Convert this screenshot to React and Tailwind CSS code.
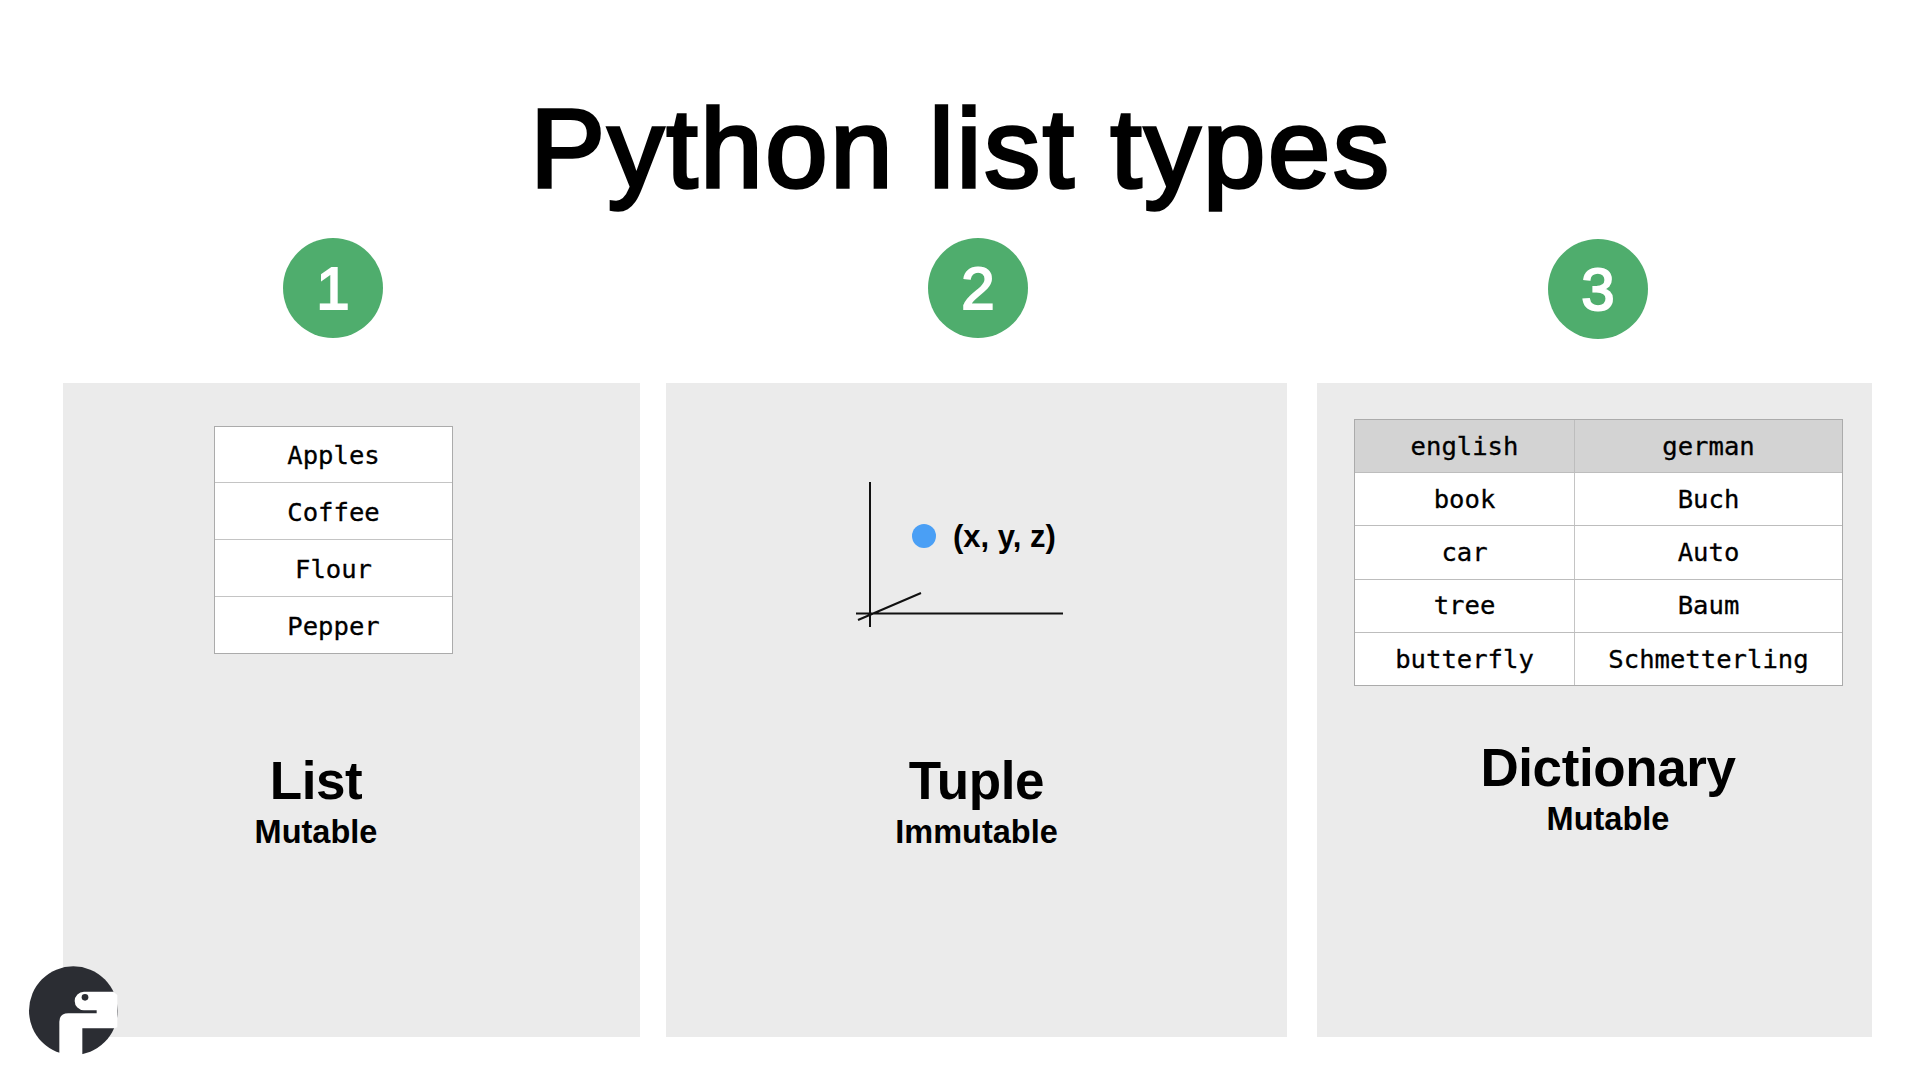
const mono = "font-['DejaVu_Sans_Mono',monospace] [-webkit-text-stroke:0.3px_#000]";
const sans = "font-['Liberation_Sans',Arial,sans-serif]";

function Badge({ n, className }) {
  return (
    <div className={`flex h-[100px] w-[100px] items-center justify-center rounded-full bg-[#4fad6d] pt-[2px] text-[60px] leading-none text-white [-webkit-text-stroke:2px_#fff] ${className}`}>
      {n}
    </div>
  );
}

function Label({ title, sub, className }) {
  return (
    <div className={`flex flex-col items-center text-black ${className}`}>
      <div className="text-[53px] font-bold leading-[60px] tracking-[-0.4px]">{title}</div>
      <div className="mt-[2px] text-[32.5px] font-bold leading-[38px]">{sub}</div>
    </div>
  );
}

const listItems = ["Apples", "Coffee", "Flour", "Pepper"];
const dict = [
  ["book", "Buch"],
  ["car", "Auto"],
  ["tree", "Baum"],
  ["butterfly", "Schmetterling"],
];

export default function App() {
  return (
    <div className={`relative h-[1080px] w-[1920px] overflow-hidden bg-white ${sans}`}>
      <div className="flex h-[238px] items-center justify-center">
        <h1 className="mt-[60px] ml-[2px] text-[112px] font-normal leading-none tracking-[2.7px] text-black [-webkit-text-stroke:3.5px_#000]">
          Python list types
        </h1>
      </div>
      <div className="flex pl-[63px]">
        <div className="w-[577px]">
          <Badge n="1" className="ml-[220px]" />
          <div className="mt-[45px] h-[654px] bg-[#ebebeb] pl-[151px] pt-[43px]">
            <div className={`w-[239px] border border-[#ababab] bg-white text-[25.6px] text-black ${mono}`}>
              {listItems.map((t, i) => (
                <div key={t} className={`flex items-center justify-center pt-[2px] ${i ? "h-[57px] border-t border-[#c4c4c4]" : "h-[55px]"}`}>{t}</div>
              ))}
            </div>
            <Label title="List" sub="Mutable" className="ml-[-151px] mr-[71px] mt-[97px]" />
          </div>
        </div>
        <div className="ml-[26px] w-[621px]">
          <Badge n="2" className="ml-[262px]" />
          <div className="mt-[45px] h-[654px] bg-[#ebebeb] pt-[99px]">
            <div className="flex h-[145px] justify-start pl-[187px]">
              <div className="relative h-[145px] w-[210px]">
                <svg width="210" height="145" viewBox="0 0 210 145" className="absolute left-0 top-0">
                  <path d="M17 0V145M3 131.5H210M5 138L68 111" stroke="#111" strokeWidth="2" fill="none" />
                </svg>
                <div className="absolute left-[59px] top-[42px] h-[24px] w-[24px] rounded-full bg-[#4a9ff5]" />
                <div className="absolute left-[100px] top-[37px] whitespace-nowrap text-[31px] font-bold leading-[36px] text-black">(x, y, z)</div>
              </div>
            </div>
            <Label title="Tuple" sub="Immutable" className="mt-[124px]" />
          </div>
        </div>
        <div className="ml-[30px] w-[555px]">
          <Badge n="3" className="ml-[231px] mt-[1px]" />
          <div className="mt-[44px] h-[654px] bg-[#ebebeb] pl-[37px] pt-[36px]">
            <div className={`w-[489px] border border-[#ababab] bg-white text-[25.6px] text-black ${mono}`}>
              <div className="grid h-[52px] grid-cols-[220px_1fr] bg-[#d3d3d3]">
                <div className="flex items-center justify-center border-r border-[#bdbdbd]">english</div>
                <div className="flex items-center justify-center">german</div>
              </div>
              {dict.map(([a, b]) => (
                <div key={a} className="grid h-[53.25px] grid-cols-[220px_1fr] border-t border-[#bdbdbd]">
                  <div className="flex items-center justify-center border-r border-[#c4c4c4]">{a}</div>
                  <div className="flex items-center justify-center">{b}</div>
                </div>
              ))}
            </div>
            <Label title="Dictionary" sub="Mutable" className="ml-[-37px] mr-[-27px] mt-[52px]" />
          </div>
        </div>
      </div>
      <svg width="200" height="160" viewBox="0 0 600 480" className="absolute left-0 top-[920px]">
        <circle cx="220" cy="272" r="133" fill="#2b2d33" />
        <path d="M178 410V305Q178 280 205 280H290V271H252A28 28 0 0 1 252 215H340L352 225V322L344 325H247V410Z" fill="#fff" />
        <circle cx="255" cy="232" r="10" fill="#2b2d33" />
      </svg>
    </div>
  );
}
